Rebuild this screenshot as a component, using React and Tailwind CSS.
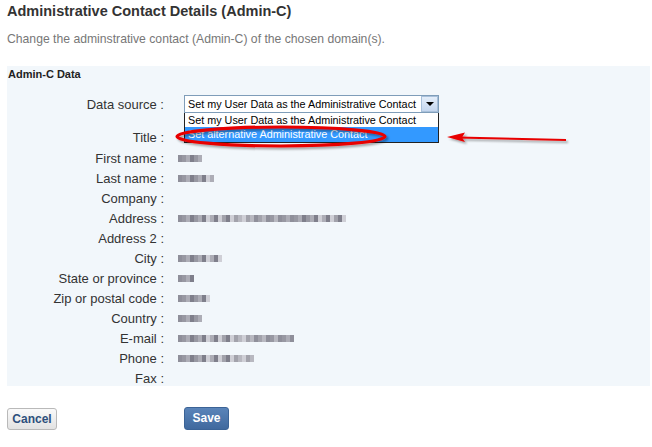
import React from 'react';

const grays = ['bg-[#8f8f9a]', 'bg-[#b8b8c0]', 'bg-[#a2a2ab]', 'bg-[#cfcfd6]', 'bg-[#7f7f8b]', 'bg-[#adadb6]', 'bg-[#9898a2]'];

// pixelated (blurred) stand-in for hidden personal data
const Blurred = ({ width }) => {
  const blocks = [];
  const count = Math.ceil(width / 4);
  for (let i = 0; i < count; i++) {
    blocks.push(<span key={i} className={`block w-[4px] h-[7px] ${grays[(i * 5 + (i % 4)) % grays.length]}`}></span>);
  }
  return <span className="flex blur-[0.5px]">{blocks}</span>;
};

const rows = [
  { label: 'Title', value: 0 },
  { label: 'First name', value: 23 },
  { label: 'Last name', value: 35 },
  { label: 'Company', value: 0 },
  { label: 'Address', value: 165 },
  { label: 'Address 2', value: 0 },
  { label: 'City', value: 41 },
  { label: 'State or province', value: 16 },
  { label: 'Zip or postal code', value: 30 },
  { label: 'Country', value: 21 },
  { label: 'E-mail', value: 115 },
  { label: 'Phone', value: 76 },
  { label: 'Fax', value: 0 }
];

export default function App() {
  return (
    <div className="relative w-[652px] h-[447px] bg-white font-['Liberation_Sans',Arial,sans-serif] text-[#333]">
      {/* Heading */}
      <div className="px-[7px] pt-[2px]">
        <h1 className="text-[14.5px] font-bold leading-[18px] text-[#333]">Administrative Contact Details (Admin-C)</h1>
        <p className="mt-[12px] text-[12.2px] leading-[14px] text-[#777]">
          Change the adminstrative contact (Admin-C) of the chosen domain(s).
        </p>
      </div>

      {/* Panel */}
      <div className="mt-[20px] ml-[7px] w-[643px] h-[320px] bg-[#f2f7fb]">
        <div className="pl-[1px] pt-[2px] h-[18px] text-[11px] font-bold leading-[13px] text-[#222]">Admin-C Data</div>

        <div className="flex items-center h-[22px] mt-[9px] mb-[12px]">
          <div className="w-[160px] text-right text-[13px] leading-[15px] pr-[3px]">Data source :</div>
          <div className="ml-[17px] relative">
            <div className="flex items-center w-[255px] h-[18px] bg-white border border-[#7f9db9]">
              <span className="flex-1 min-w-0 overflow-hidden whitespace-nowrap pl-[3px] text-[10.8px] leading-[13px] text-black">
                Set my User Data as the Administrative Contact
              </span>
              <span className="flex shrink-0 items-center justify-center w-[17px] h-[16px] border border-[#a8c0da] bg-gradient-to-b from-[#e4eefa] to-[#c4d6ee]">
                <span className="w-0 h-0 border-l-[4px] border-r-[4px] border-t-[4px] border-l-transparent border-r-transparent border-t-black"></span>
              </span>
            </div>
            {/* open list */}
            <div className="absolute left-0 top-[18px] w-[255px] bg-white border-l border-b border-r border-[#222] z-10">
              <div className="h-[14px] pl-[3px] whitespace-nowrap overflow-hidden text-[10.8px] leading-[14px] text-black">Set my User Data as the Administrative Contact</div>
              <div className="h-[15px] pl-[3px] whitespace-nowrap text-[10.8px] leading-[15px] text-white bg-[#3399ff]">Set alternative Administrative Contact</div>
            </div>
          </div>
        </div>

        {rows.map((row, i) => (
          <div key={row.label} className={`flex items-center ${i === 0 ? 'h-[21px]' : 'h-[20px]'}`}>
            <div className="w-[160px] text-right text-[13px] leading-[15px] pr-[3px] whitespace-nowrap">{row.label} :</div>
            <div className="ml-[11px]">{row.value > 0 && <Blurred width={row.value} />}</div>
          </div>
        ))}
      </div>

      {/* Buttons */}
      <div className="flex items-center mt-[21px] ml-[7px]">
        <button className="w-[50px] h-[22px] rounded-[3px] border border-[#b9b9b9] bg-gradient-to-b from-[#fafafa] to-[#e2e2e2] text-[12px] font-bold text-[#2d4f7c] leading-[20px]">
          Cancel
        </button>
        <button className="ml-[127px] w-[45px] h-[23px] rounded-[3px] border border-[#3b6396] bg-gradient-to-b from-[#5a84b9] to-[#40699e] text-[12px] font-bold text-white leading-[21px]">
          Save
        </button>
      </div>

      {/* Annotations */}
      <svg className="absolute inset-0 pointer-events-none z-20" width="652" height="447" viewBox="0 0 652 447">
        <defs>
          <filter id="sh" x="-10%" y="-50%" width="120%" height="200%">
            <feDropShadow dx="2" dy="2" stdDeviation="1.2" floodColor="#000" floodOpacity="0.35" />
          </filter>
        </defs>
        <ellipse cx="281" cy="136.5" rx="104" ry="9.5" fill="none" stroke="#e80000" strokeWidth="3.2" filter="url(#sh)" />
        <g filter="url(#sh)">
          <line x1="566" y1="140" x2="458" y2="137.5" stroke="#e80000" strokeWidth="2" />
          <polygon points="447,137 465,132.5 462,137.5 465,142" fill="#e80000" />
        </g>
      </svg>
    </div>
  );
}
